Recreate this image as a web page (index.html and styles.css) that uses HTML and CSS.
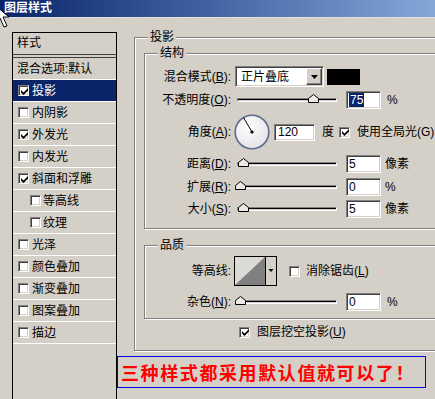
FILE: index.html
```html
<!DOCTYPE html>
<html lang="zh-CN">
<head>
<meta charset="utf-8">
<title>图层样式</title>
<link rel="stylesheet" href="styles.css">
</head>
<body>
<div class="win">
  <div class="titlebar">图层样式</div>
  <div class="main">
    <div class="panel">
      <div class="panel-head">样式</div>
      <div class="item plain">混合选项:默认</div>
      <div class="item selected"><span class="cb on"><svg viewBox="0 0 7 7"><path d="M0 2L2.5 4.5L7 0V2.5L2.5 7L0 4.5Z"/></svg></span>投影</div>
      <div class="item"><span class="cb"></span>内阴影</div>
      <div class="item"><span class="cb on"><svg viewBox="0 0 7 7"><path d="M0 2L2.5 4.5L7 0V2.5L2.5 7L0 4.5Z"/></svg></span>外发光</div>
      <div class="item"><span class="cb"></span>内发光</div>
      <div class="item"><span class="cb on"><svg viewBox="0 0 7 7"><path d="M0 2L2.5 4.5L7 0V2.5L2.5 7L0 4.5Z"/></svg></span>斜面和浮雕</div>
      <div class="item sub"><span class="cb"></span>等高线</div>
      <div class="item sub"><span class="cb"></span>纹理</div>
      <div class="item"><span class="cb"></span>光泽</div>
      <div class="item"><span class="cb"></span>颜色叠加</div>
      <div class="item"><span class="cb"></span>渐变叠加</div>
      <div class="item"><span class="cb"></span>图案叠加</div>
      <div class="item"><span class="cb"></span>描边</div>
    </div>
    <div class="content">
      <div class="group outer">
        <span class="group-title">投影</span>
        <div class="group struct">
          <span class="group-title">结构</span>
          <div class="row r1">
            <span class="lbl">混合模式(<u>B</u>):</span>
            <div class="select"><span>正片叠底</span><span class="select-btn"><svg width="7" height="4" viewBox="0 0 7 4"><path d="M0 0H7L3.5 4Z"/></svg></span></div>
            <div class="swatch"></div>
          </div>
          <div class="row r2">
            <span class="lbl">不透明度(<u>O</u>):</span>
            <div class="slider"><svg class="thumb" style="left:70px" width="11" height="9" viewBox="0 0 11 9"><path d="M0.5 8.5V4.5L5.5 0.5L10.5 4.5V8.5Z"/></svg></div>
            <div class="input"><span class="hl">75</span></div>
            <span class="unit">%</span>
          </div>
          <div class="row r3">
            <span class="lbl">角度(<u>A</u>):</span>
            <svg class="dial" width="36" height="36" viewBox="0 0 36 36">
              <defs><radialGradient id="dg" cx="0.4" cy="0.35" r="0.7"><stop offset="0" stop-color="#ffffff"/><stop offset="1" stop-color="#e2e2e6"/></radialGradient></defs>
              <circle cx="18" cy="18" r="16.8" fill="url(#dg)" stroke="#5b6b8f" stroke-width="1.6"/>
              <line x1="18" y1="18" x2="9.5" y2="3.5" stroke="#000" stroke-width="1"/>
              <circle cx="18" cy="18" r="1.6" fill="#000"/>
            </svg>
            <div class="input angle">120</div>
            <span class="deg">度</span>
            <span class="cb on gl"><svg viewBox="0 0 7 7"><path d="M0 2L2.5 4.5L7 0V2.5L2.5 7L0 4.5Z"/></svg></span>
            <span class="cb-text">使用全局光(G)</span>
          </div>
          <div class="row r4">
            <span class="lbl">距离(<u>D</u>):</span>
            <div class="slider"><svg class="thumb" style="left:0px" width="11" height="9" viewBox="0 0 11 9"><path d="M0.5 8.5V4.5L5.5 0.5L10.5 4.5V8.5Z"/></svg></div>
            <div class="input">5</div>
            <span class="unit px">像素</span>
          </div>
          <div class="row r5">
            <span class="lbl">扩展(<u>R</u>):</span>
            <div class="slider"><svg class="thumb" style="left:-3px" width="11" height="9" viewBox="0 0 11 9"><path d="M0.5 8.5V4.5L5.5 0.5L10.5 4.5V8.5Z"/></svg></div>
            <div class="input">0</div>
            <span class="unit px">%</span>
          </div>
          <div class="row r6">
            <span class="lbl">大小(<u>S</u>):</span>
            <div class="slider"><svg class="thumb" style="left:0px" width="11" height="9" viewBox="0 0 11 9"><path d="M0.5 8.5V4.5L5.5 0.5L10.5 4.5V8.5Z"/></svg></div>
            <div class="input">5</div>
            <span class="unit px">像素</span>
          </div>
        </div>
        <div class="group quality">
          <span class="group-title">品质</span>
          <div class="row q1">
            <span class="lbl q">等高线:</span>
            <svg class="contour" width="43" height="30" viewBox="0 0 43 30">
              <rect x="0.5" y="0.5" width="42" height="29" fill="#d4d0c8" stroke="#000"/>
              <rect x="1" y="1" width="30" height="28" fill="#dcdad4"/>
              <path d="M1 29L31 1V29Z" fill="#808080"/>
              <line x1="31.5" y1="1" x2="31.5" y2="29" stroke="#000"/>
              <path d="M34.5 13H39.5L37 16Z" fill="#000"/>
            </svg>
            <span class="cb aa"></span>
            <span class="cb-text">消除锯齿(<u>L</u>)</span>
          </div>
          <div class="row q2">
            <span class="lbl">杂色(<u>N</u>):</span>
            <div class="slider"><svg class="thumb" style="left:-3px" width="11" height="9" viewBox="0 0 11 9"><path d="M0.5 8.5V4.5L5.5 0.5L10.5 4.5V8.5Z"/></svg></div>
            <div class="input">0</div>
            <span class="unit">%</span>
          </div>
        </div>
        <div class="row knock">
          <span class="cb on"><svg viewBox="0 0 7 7"><path d="M0 2L2.5 4.5L7 0V2.5L2.5 7L0 4.5Z"/></svg></span>
          <span class="cb-text">图层挖空投影(<u>U</u>)</span>
        </div>
      </div>
    </div>
  </div>
  <div class="note">三种样式都采用默认值就可以了！</div>
  <svg class="cursor" width="12" height="26" viewBox="0 0 12 26"><path d="M-4 4V20L0 16L4 25L7 24L3 15H9Z" fill="#fff" stroke="#000" stroke-width="1"/></svg>
</div>
</body>
</html>
```
FILE: styles.css
```css
* { box-sizing: border-box; }

html, body {
  margin: 0;
  padding: 0;
  background: #d4d0c8;
}

body {
  font-family: "Liberation Sans", "Noto Sans CJK SC", sans-serif;
  font-size: 12px;
  color: #000;
}

.win {
  position: relative;
  width: 435px;
  height: 399px;
  overflow: hidden;
  display: flex;
  flex-direction: column;
  background: #d4d0c8;
}

.titlebar {
  flex: none;
  height: 18px;
  padding-left: 4px;
  line-height: 16px;
  font-weight: bold;
  color: #fff;
  background: linear-gradient(to right, #0a246a 0%, #3d5fa0 45%, #85a7d7 100%);
  border-bottom: 1px solid #e4e0dc;
}

.main {
  flex: 1;
  display: flex;
  min-height: 0;
}

/* left styles list */
.panel {
  flex: none;
  width: 105px;
  margin: 14px 0 0 12px;
  border: 1px solid #000;
  border-bottom: 0;
}

.panel-head {
  height: 25px;
  padding: 0 0 4px 4px;
  line-height: 21px;
  border-bottom: 4px double #404040;
}

.item {
  height: 22px;
  display: flex;
  align-items: center;
  padding-left: 5px;
  border-bottom: 1px solid #fff;
  line-height: 14px;
  white-space: nowrap;
}

.item.plain { padding-left: 4px; }
.item.sub { padding-left: 17px; }
.item .cb { margin-right: 3px; }
.item.sub .cb { margin-right: 2px; }

.item.selected {
  background: #0a246a;
  color: #fff;
}

/* checkbox */
.cb {
  flex: none;
  width: 11px;
  height: 11px;
  border: 1px solid;
  border-color: #808080 #fff #fff #808080;
  box-shadow: inset 1px 1px 0 #404040, inset -1px -1px 0 #d4d0c8;
  background: #fff;
  display: flex;
  align-items: center;
  justify-content: center;
}

.cb svg {
  width: 7px;
  height: 7px;
  fill: #000;
  margin: 1px 0 0 1px;
}

/* right content */
.content {
  flex: none;
  width: 320px;
  margin-left: 17px;
  padding-top: 19px;
}

.group {
  position: relative;
  border: 1px solid #808080;
  box-shadow: inset 1px 1px 0 #fff, 1px 1px 0 #fff;
}

.group-title {
  position: absolute;
  top: -8px;
  left: 13px;
  padding: 0 2px;
  line-height: 14px;
  background: #d4d0c8;
}

.outer { padding: 15px 0 10px 9px; }
.struct { padding: 12px 0 10px 0; }
.quality { margin-top: 16px; padding: 10px 0 7px 0; }

.row {
  display: flex;
  align-items: center;
  white-space: nowrap;
  line-height: 14px;
}

.r1 { height: 21px; margin-bottom: 4px; }
.r2 { height: 18px; margin-bottom: 5px; }
.r3 { height: 36px; margin-bottom: 5px; }
.r4 { height: 18px; margin-bottom: 5px; }
.r5 { height: 18px; margin-bottom: 4px; }
.r6 { height: 18px; }
.q1 { height: 30px; margin-bottom: 7px; }
.q2 { height: 18px; }

.lbl {
  flex: none;
  width: 86px;
  margin-right: 4px;
  text-align: right;
}

.lbl.q { margin-right: 3px; }

/* dropdown */
.select {
  flex: none;
  width: 89px;
  height: 21px;
  display: flex;
  align-items: center;
  padding: 0 1px 0 5px;
  background: #fff;
  border: 1px solid;
  border-color: #808080 #fff #fff #808080;
  box-shadow: inset 1px 1px 0 #404040, inset -1px -1px 0 #d4d0c8;
}

.select-btn {
  margin-left: auto;
  width: 16px;
  height: 17px;
  display: flex;
  align-items: center;
  justify-content: center;
  background: #d4d0c8;
  border: 1px solid;
  border-color: #fff #404040 #404040 #fff;
  box-shadow: inset -1px -1px 0 #808080;
}

.select-btn svg { fill: #000; }

.swatch {
  flex: none;
  width: 33px;
  height: 16px;
  margin-left: 3px;
  background: #000;
}

/* slider */
.slider {
  position: relative;
  flex: none;
  width: 100px;
  height: 4px;
  margin-left: 2px;
  border-top: 1px solid #808080;
  border-left: 1px solid #808080;
  border-bottom: 1px solid #fff;
  border-right: 1px solid #fff;
  box-shadow: inset 0 1px 0 #000;
  background: #d4d0c8;
}

.thumb {
  position: absolute;
  top: -5px;
  fill: #eceae6;
  stroke: #000;
  stroke-width: 1;
}

/* inputs */
.input {
  flex: none;
  width: 35px;
  height: 18px;
  margin-left: 9px;
  padding-left: 2px;
  display: flex;
  align-items: center;
  background: #fff;
  border: 1px solid;
  border-color: #808080 #fff #fff #808080;
  box-shadow: inset 1px 1px 0 #404040, inset -1px -1px 0 #d4d0c8;
}

.hl {
  background: #0a246a;
  color: #fff;
  padding: 0 1px;
  line-height: 14px;
}

.unit { margin-left: 6px; }
.unit.px { margin-left: 4px; }

.dial {
  flex: none;
  margin-left: -1px;
}

.input.angle {
  width: 41px;
  height: 17px;
  margin-left: 4px;
  padding-left: 3px;
}

.deg { margin-left: 7px; }
.cb.gl { margin-left: 5px; }
.cb-text { margin-left: 7px; }

.contour { flex: none; }
.cb.aa { margin-left: 12px; }
.aa + .cb-text { margin-left: 6px; }

.knock {
  height: 16px;
  margin-top: 5px;
  padding-left: 95px;
}

/* annotation */
.note {
  position: absolute;
  left: 117px;
  top: 356px;
  width: 309px;
  height: 32px;
  padding-left: 3px;
  border: 1px solid #0000ff;
  color: #ff0000;
  font-family: "Noto Sans CJK SC", sans-serif;
  font-weight: bold;
  font-size: 18px;
  line-height: 30px;
  letter-spacing: 1.6px;
  white-space: nowrap;
  background: #d4d0c8;
}

.cursor {
  position: absolute;
  left: 0;
  top: 2px;
}
```
